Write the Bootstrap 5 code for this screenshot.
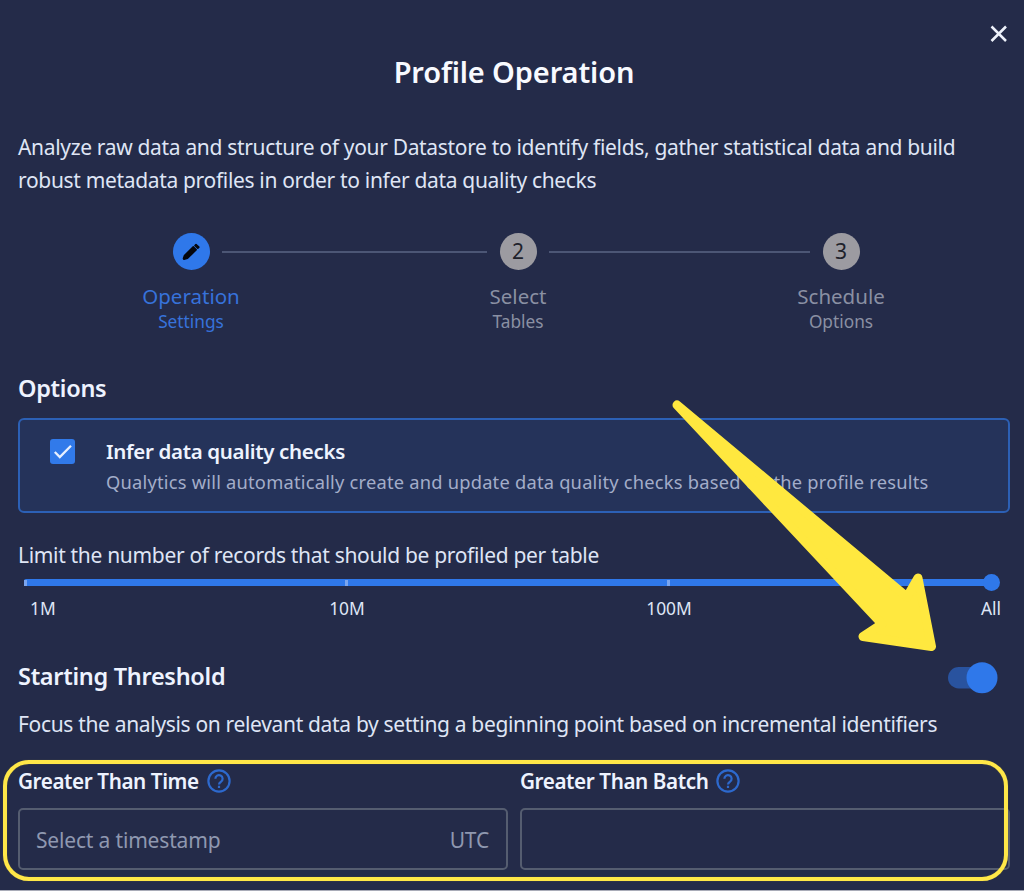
<!DOCTYPE html>
<html lang="en">
<head>
  <meta charset="UTF-8">
  <meta name="viewport" content="width=device-width, initial-scale=1">
  <title>Profile Operation</title>
  <link href="https://cdn.jsdelivr.net/npm/bootstrap@5.3.0/dist/css/bootstrap.min.css" rel="stylesheet">
  <style>
    body {
      height: 891px;
      overflow: hidden;
      background: #242b49;
      border-bottom: 1px solid #a9acb8;
      color: #dfe5f5;
      font-family: "Noto Sans", "Open Sans", sans-serif;
      font-size: 21px;
      letter-spacing: -.33px;
      white-space: nowrap;
    }
    svg { display: block; }
    .dialog { padding: 24px 14px 0 18px; }
    .dialog-close { width: 20px; height: 20px; margin-right: 1px; }
    .dialog-title { height: 40px; margin-top: 8px; line-height: 40px; font-size: 29px; font-weight: 600; letter-spacing: -.12px; color: #f8faff; }
    .intro { margin-top: 39px; line-height: 33px; }

    .stepper { height: 91px; margin-top: 36px; padding-left: 142px; padding-right: 138px; letter-spacing: 0; }
    .step { width: 62px; color: #8a90a3; }
    .step-dot { width: 37px; height: 37px; background: #9c9ba1; color: #20222b; font-size: 21px; }
    .step-name { height: 25px; margin-top: 14px; line-height: 25px; font-size: 20.5px; }
    .step-sub { height: 25px; line-height: 25px; font-size: 17.3px; }
    .step.active { color: #3772da; }
    .step.active .step-dot { background: #2f78ea; color: #05070d; }
    .step-line { height: 2px; margin-top: 18px; background: #4c5675; }
    .step-line-first { flex: 0 0 265px; }

    .heading { height: 32px; line-height: 32px; font-size: 23.5px; font-weight: 600; letter-spacing: -.3px; color: #eef3ff; }
    .option-box { height: 95px; margin-top: 14px; padding: 19px 30px; border: 2px solid #2c60b5; border-radius: 6px; background: #25335a; }
    .option-check { width: 25px; height: 25px; margin-right: 31px; border-radius: 3px; background: #317aea; }
    .option-name { height: 31px; line-height: 30px; margin-top: -3px; font-size: 20.5px; font-weight: 600; color: #eef3ff; }
    .option-text { height: 30px; line-height: 30px; font-size: 18.3px; letter-spacing: .22px; color: #a3adc9; }

    .limit-label { height: 32px; margin-top: 26px; line-height: 32px; letter-spacing: -.32px; }
    .slider { height: 17px; margin: 3px 19px 0 6px; }
    .slider-track { height: 7px; background: #2f78ea; border-radius: 2px; }
    .slider-track i { width: 3px; height: 6px; background: #7ba5ee; }
    .slider-thumb { width: 17px; height: 17px; margin-left: -8.5px; margin-right: -8.5px; background: #2f78ea; }
    .slider-labels { height: 24px; margin: 5px -4px 0 -16px; line-height: 24px; font-size: 17.4px; letter-spacing: 0; }
    .slider-labels span { width: 46px; text-align: center; }
    .slider-labels span:first-child { text-indent: 28px; }

    .threshold-head { height: 32px; margin-top: 40px; }
    .toggle { width: 50px; height: 36px; margin-right: 12px; }
    .threshold-text { height: 32px; margin-top: 16px; line-height: 32px; }
    .fields { margin-top: 24px; gap: 12px; }
    .field-label { height: 33px; line-height: 32px; font-size: 20.7px; font-weight: 600; letter-spacing: -.42px; color: #eef3ff; }
    .field-box { height: 62px; margin-top: 11px; padding: 3px 17px 0 16px; border: 2px solid #555d70; border-radius: 5px; letter-spacing: -.17px; color: #8f98b0; }

    /* annotation layer over the dialog */
    .highlight { left: 3px; top: 760px; width: 1005px; height: 121px; border: 4px solid #ffe748; border-radius: 26px; box-shadow: 0 0 1px #766f3f, inset 0 0 1px #766f3f; }
    .pointer { left: 660px; top: 390px; }
  </style>
</head>
<body class="position-relative">
  <main class="dialog">
    <div class="d-flex justify-content-end">
      <svg class="dialog-close" viewBox="0 0 20 20" role="button" aria-label="Close"><path d="M2.500 2.500L17 17M17 2.500L2.500 17" stroke="#eef2fb" stroke-width="2.500" fill="none"/></svg>
    </div>
    <h1 class="dialog-title text-center mb-0">Profile Operation</h1>
    <p class="intro mb-0">Analyze raw data and structure of your Datastore to identify fields, gather statistical data and build<br>robust metadata profiles in order to infer data quality checks</p>

    <div class="stepper d-flex align-items-start">
      <div class="step active d-flex flex-column align-items-center">
        <div class="step-dot rounded-circle d-flex align-items-center justify-content-center">
          <svg width="22" height="22" viewBox="0 0 22 22"><path d="M3.500 17.500L4.500 14.500L13.300 5.800L16.200 8.700L7.500 17.300L4 18.300ZM15 4.500L16 3.600L18.800 6.200L17.800 7.200Z" fill="currentColor" stroke="currentColor" stroke-width="1.600" stroke-linejoin="round"/></svg>
        </div>
        <div class="step-name">Operation</div>
        <div class="step-sub">Settings</div>
      </div>
      <div class="step-line step-line-first"></div>
      <div class="step d-flex flex-column align-items-center">
        <div class="step-dot rounded-circle d-flex align-items-center justify-content-center">2</div>
        <div class="step-name">Select</div>
        <div class="step-sub">Tables</div>
      </div>
      <div class="step-line flex-fill"></div>
      <div class="step d-flex flex-column align-items-center">
        <div class="step-dot rounded-circle d-flex align-items-center justify-content-center">3</div>
        <div class="step-name">Schedule</div>
        <div class="step-sub">Options</div>
      </div>
    </div>

    <h2 class="heading mt-5 mb-0">Options</h2>
    <div class="option-box d-flex">
      <div class="option-check flex-shrink-0">
        <svg width="25" height="25" viewBox="0 0 25 25"><path d="M4.800 13L9.800 18L21 6.800" stroke="#e8f0ff" stroke-width="2.300" fill="none"/></svg>
      </div>
      <div>
        <div class="option-name">Infer data quality checks</div>
        <div class="option-text">Qualytics will automatically create and update data quality checks based on the profile results</div>
      </div>
    </div>

    <div class="limit-label">Limit the number of records that should be profiled per table</div>
    <div class="slider d-flex align-items-center">
      <div class="slider-track flex-fill d-flex justify-content-between align-items-center"><i></i><i></i><i></i><i></i></div>
      <div class="slider-thumb rounded-circle"></div>
    </div>
    <div class="slider-labels d-flex justify-content-between"><span>1M</span><span>10M</span><span>100M</span><span>All</span></div>

    <div class="threshold-head d-flex justify-content-between align-items-center">
      <h2 class="heading mb-0">Starting Threshold</h2>
      <svg class="toggle" viewBox="0 0 50 36"><rect x="0" y="9" width="44" height="21.500" rx="10.700" fill="#29539f"/><circle cx="34" cy="19.700" r="15.500" fill="#2f78ea"/></svg>
    </div>
    <div class="threshold-text">Focus the analysis on relevant data by setting a beginning point based on incremental identifiers</div>

    <div class="fields d-flex">
      <div class="flex-fill w-50">
        <div class="field-label d-flex align-items-center gap-2"><span>Greater Than Time</span>
          <svg width="24" height="24" viewBox="0 0 24 24" fill="none" stroke="#2d69cd" stroke-width="2.200"><circle cx="12" cy="12" r="10.600"/><path d="M8.400 9.800a3.600 3.600 0 1 1 5.600 2.900c-1.300 .8-2 1.300-2 2.800M12 16.700v2.300"/></svg>
        </div>
        <div class="field-box d-flex align-items-center justify-content-between"><span>Select a timestamp</span><span>UTC</span></div>
      </div>
      <div class="flex-fill w-50">
        <div class="field-label d-flex align-items-center gap-2"><span>Greater Than Batch</span>
          <svg width="24" height="24" viewBox="0 0 24 24" fill="none" stroke="#2d69cd" stroke-width="2.200"><circle cx="12" cy="12" r="10.600"/><path d="M8.400 9.800a3.600 3.600 0 1 1 5.600 2.900c-1.300 .8-2 1.300-2 2.800M12 16.700v2.300"/></svg>
        </div>
        <div class="field-box"></div>
      </div>
    </div>
  </main>

  <div class="highlight position-absolute"></div>
  <svg class="pointer position-absolute" width="290" height="270" viewBox="660 390 290 270"><path d="M677 405L907 597L918 578L931.500 646.500L863 636.500L882 624Z" fill="#ffe83f" stroke="#ffe83f" stroke-width="9" stroke-linejoin="round"/></svg>

  <script src="https://cdn.jsdelivr.net/npm/bootstrap@5.3.0/dist/js/bootstrap.bundle.min.js"></script>
</body>
</html>
